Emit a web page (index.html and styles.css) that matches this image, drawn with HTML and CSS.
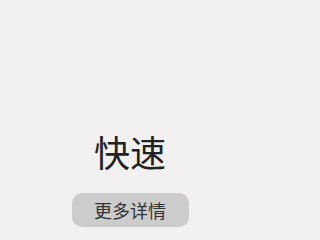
FILE: index.html
```html
<!DOCTYPE html>
<html lang="zh">
<head>
<meta charset="utf-8">
<link rel="stylesheet" href="styles.css">
</head>
<body>
<main class="hero">
  <h1 class="hero-title">快速</h1>
  <button class="hero-button">更多详情</button>
</main>
</body>
</html>
```
FILE: styles.css
```css
html, body {
  margin: 0;
  padding: 0;
  background: #f2f0f1;
  overflow: hidden;
}
.hero {
  box-sizing: border-box;
  width: 260px;
  height: 238px;
  display: flex;
  flex-direction: column;
  align-items: center;
  justify-content: flex-end;
  padding-bottom: 11px;
  font-family: "Noto Sans CJK SC", "Noto Sans", sans-serif;
}
.hero-title {
  margin: 0 0 20px 0;
  font-size: 36px;
  line-height: 44px;
  font-weight: 400;
  color: #222;
}
.hero-button {
  width: 117px;
  height: 34px;
  border: none;
  border-radius: 10px;
  background: #cccccc;
  color: #333;
  font-family: "Noto Sans CJK SC", "Noto Sans", sans-serif;
  font-size: 18px;
  line-height: 34px;
  padding: 0;
}
```
